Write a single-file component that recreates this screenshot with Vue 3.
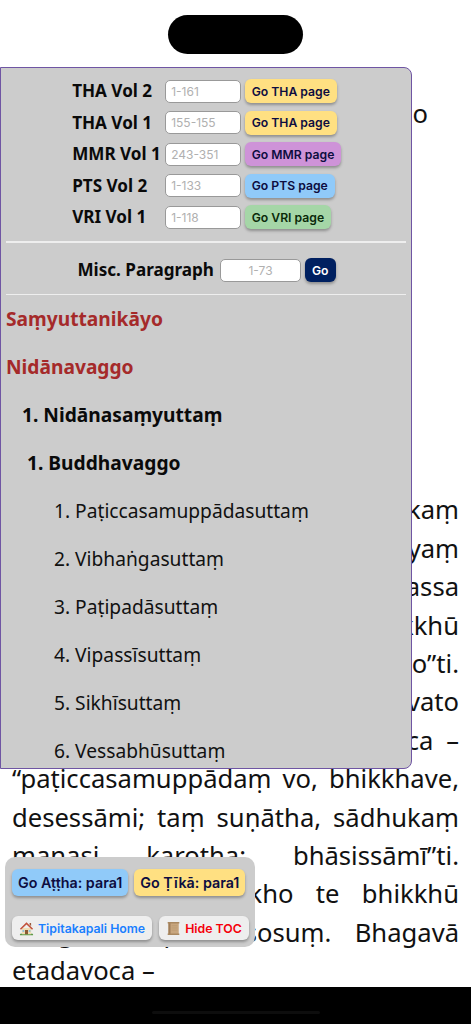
<script setup>
const volumes = [
  { label: 'THA Vol 2', range: '1-161', action: 'Go THA page', tone: 'yellow' },
  { label: 'THA Vol 1', range: '155-155', action: 'Go THA page', tone: 'yellow' },
  { label: 'MMR Vol 1', range: '243-351', action: 'Go MMR page', tone: 'purple' },
  { label: 'PTS Vol 2', range: '1-133', action: 'Go PTS page', tone: 'blue' },
  { label: 'VRI Vol 1', range: '1-118', action: 'Go VRI page', tone: 'green' },
]
const toc = [
  { text: 'Saṃyuttanikāyo', level: 'l0' },
  { text: 'Nidānavaggo', level: 'l0' },
  { text: '1. Nidānasaṃyuttaṃ', level: 'l1' },
  { text: '1. Buddhavaggo', level: 'l2' },
  { text: '1. Paṭiccasamuppādasuttaṃ', level: 'l3' },
  { text: '2. Vibhaṅgasuttaṃ', level: 'l3' },
  { text: '3. Paṭipadāsuttaṃ', level: 'l3' },
  { text: '4. Vipassīsuttaṃ', level: 'l3' },
  { text: '5. Sikhīsuttaṃ', level: 'l3' },
  { text: '6. Vessabhūsuttaṃ', level: 'l3' },
]
const lines = [
  'Evaṃ me sutaṃ – ekaṃ',
  'samayaṃ bhagavā sāvatthiyaṃ',
  'viharati jetavane anāthapiṇḍikassa',
  'ārāme. Tatra kho bhagavā bhikkhū',
  'āmantesi – “bhikkhavo”ti.',
  '“Bhadante”ti te bhikkhū bhagavato',
  'paccassosuṃ. Bhagavā etadavoca –',
  '“paṭiccasamuppādaṃ vo, bhikkhave,',
  'desessāmi; taṃ suṇātha, sādhukaṃ',
  'manasi karotha; bhāsissāmī”ti.',
  '“Evaṃ, bhante”ti kho te bhikkhū',
  'bhagavato paccassosuṃ. Bhagavā',
]
</script>

<template>
  <div class="screen">
    <main class="article">
      <h2 class="homage">Saṃyuttanikāye Nidānavaggo</h2>
      <div class="para">
        <p v-for="line in lines" :key="line" class="line">{{ line }}</p>
        <p class="line last">etadavoca –</p>
      </div>
    </main>

    <div class="island"></div>

    <aside class="panel">
      <div class="vols">
        <template v-for="v in volumes" :key="v.label + v.range">
          <span class="vol-label">{{ v.label }}</span>
          <input class="field" :placeholder="v.range" />
          <button class="btn" :class="v.tone">{{ v.action }}</button>
        </template>
      </div>
      <hr class="rule rule-first" />
      <div class="misc">
        <span class="vol-label">Misc. Paragraph</span>
        <input class="field field-misc" placeholder="1-73" />
        <button class="btn navy">Go</button>
      </div>
      <hr class="rule rule-second" />
      <ul class="toc">
        <li v-for="item in toc" :key="item.text" :class="item.level">{{ item.text }}</li>
      </ul>
    </aside>

    <div class="floater">
      <div class="float-row">
        <button class="btn blue big">Go Aṭṭha: para1</button>
        <button class="btn yellow big tika">Go Ṭīkā: para1</button>
      </div>
      <div class="float-row">
        <button class="btn light home">
          <svg class="emoji" viewBox="0 0 16 16">
            <path d="M3 7.4h10v7H3z" fill="#efdcb4" />
            <path d="M8 1.2 1 8.2l1.1 1L8 3.8l5.9 5.4 1.1-1z" fill="#c2523c" />
            <path d="M11.3 2h1.6v3.4l-1.6-1.5z" fill="#9a5a3c" />
            <path d="M6.4 9.6h3.2v4.8H6.4z" fill="#8a5a34" />
            <path d="M3.8 9.6h1.8v2H3.8zM10.4 9.6h1.8v2h-1.8z" fill="#8fc3de" />
            <path d="M1 14c.8-1 1.8-1 2.4 0h9.2c.6-1 1.6-1 2.4 0v1.2H1z" fill="#5f9a46" />
          </svg>
          <span>Tipitakapali Home</span>
        </button>
        <button class="btn light hide">
          <svg class="emoji" viewBox="0 0 16 16">
            <path d="M2.6 1.6h11v12.8h-11z" fill="#c8a67e" />
            <path d="M2.6 1.6h2.2v12.8H2.6z" fill="#9f7d58" />
            <path d="M1.8 1h12.4v1.6H1.8zM1.8 13.4h12.4V15H1.8z" fill="#a98860" />
            <path d="M6 5h6M6 7.4h6M6 9.8h6" stroke="#b8966e" stroke-width=".6" />
          </svg>
          <span>Hide TOC</span>
        </button>
      </div>
    </div>

    <div class="bottom-bar"><span class="home-indicator"></span></div>
  </div>
</template>

<style>
html, body { margin: 0; background: #fff; }
</style>

<style scoped>
.screen {
  position: relative;
  width: 471px;
  height: 1024px;
  overflow: hidden;
  background: #fff;
  font-family: "Noto Sans", sans-serif;
  color: #111;
}
.article { padding: 95px 12px 0; }
.homage {
  margin: 0 0 358px;
  padding-right: 31px;
  font-size: 25.6px;
  line-height: 38.4px;
  font-weight: 400;
  text-align: right;
}
.para {
  font-size: 25.6px;
  line-height: 38.4px;
}
.line {
  margin: 0;
  text-align: justify;
  text-align-last: justify;
}
.line.last { text-align-last: left; }
.island {
  position: absolute;
  left: 168px;
  top: 15px;
  width: 135px;
  height: 39px;
  border-radius: 20px;
  background: #000;
}
.panel {
  position: absolute;
  left: 0;
  top: 67px;
  width: 412px;
  height: 702px;
  box-sizing: border-box;
  overflow: hidden;
  background: #ccc;
  border: 1.5px solid #6f55a3;
  border-radius: 0 8px 8px 0;
  padding: 11px 5px 0;
}
.vols {
  display: grid;
  grid-template-columns: 90px max-content max-content;
  justify-content: center;
  justify-items: start;
  align-items: center;
  column-gap: 4px;
  row-gap: 7.6px;
}
.vol-label {
  padding-right: 2px;
  font-size: 17.1px;
  line-height: 24px;
  font-weight: 700;
  color: #0a0a0a;
}
.vols .vol-label {
  padding: 0 0 0 1.5px;
  white-space: nowrap;
}
.field {
  width: 76px;
  height: 23px;
  box-sizing: border-box;
  margin: 0;
  padding: 0 5.5px;
  background: #fff;
  border: 1.5px solid #999;
  border-radius: 5px;
  font-family: Inter, sans-serif;
  font-size: 12px;
  outline: none;
}
.field::placeholder { color: #b0b0b0; opacity: 1; }
.btn {
  height: 24px;
  box-sizing: border-box;
  margin: 0;
  padding: 0 7px;
  border: 0;
  border-radius: 6px;
  font-family: Inter, sans-serif;
  font-size: 12.2px;
  font-weight: 600;
  color: #0d0d40;
  white-space: nowrap;
  box-shadow: 0 2px 3px rgba(0, 0, 0, .3);
}
.yellow { background: #ffe082; }
.purple { background: #ce93d8; }
.blue { background: #90caf9; }
.green { background: #a5d6a7; color: #0a2a0a; }
.navy { background: #002060; color: #fff; padding: 0 7px; }
.rule {
  height: 1.5px;
  margin: 0;
  border: 0;
  background: #eee;
}
.rule-first { margin-top: 12px; }
.misc {
  display: flex;
  justify-content: center;
  align-items: center;
  gap: 4px;
  height: 24px;
  margin-top: 15.5px;
  padding-left: 1px;
}
.field-misc {
  width: 81px;
  height: 23px;
  text-align: center;
}
.rule-second { margin-top: 11.5px; }
.toc {
  list-style: none;
  margin: 0;
  padding: 0;
}
.toc li {
  height: 48px;
  line-height: 48px;
  white-space: nowrap;
}
.l0 { font-size: 19.2px; font-weight: 700; color: #a52a2a; }
.l1 { font-size: 19.2px; font-weight: 700; color: #0a0a0a; padding-left: 16px; }
.l2 { font-size: 19.2px; font-weight: 700; color: #0a0a0a; padding-left: 21px; }
.l3 { font-size: 19.2px; font-weight: 400; color: #111; padding-left: 48px; }
.floater {
  position: absolute;
  left: 5px;
  top: 857px;
  width: 250px;
  height: 90px;
  box-sizing: border-box;
  padding: 12px 7px 0;
  background: #ccc;
  border-radius: 10px;
}
.float-row {
  display: flex;
  gap: 6px;
}
.float-row + .float-row { margin-top: 20px; gap: 7px; }
.big {
  height: 27px;
  padding: 0 6px;
  font-size: 14.3px;
}
.tika { width: 111px; padding: 0; text-align: center; }
.light {
  display: flex;
  align-items: center;
  gap: 4px;
  height: 24px;
  padding: 0 7px;
  background: #eee;
  font-size: 12.3px;
}
.home { color: #1a7fff; }
.hide { color: #f5000a; }
.emoji { width: 15px; height: 15px; flex: none; }
.bottom-bar {
  position: absolute;
  left: 0;
  right: 0;
  bottom: 0;
  height: 37px;
  background: #000;
}
.home-indicator {
  position: absolute;
  left: 152px;
  top: 24px;
  width: 168px;
  height: 3px;
  border-radius: 2px;
  background: #0d0d0d;
}
</style>
